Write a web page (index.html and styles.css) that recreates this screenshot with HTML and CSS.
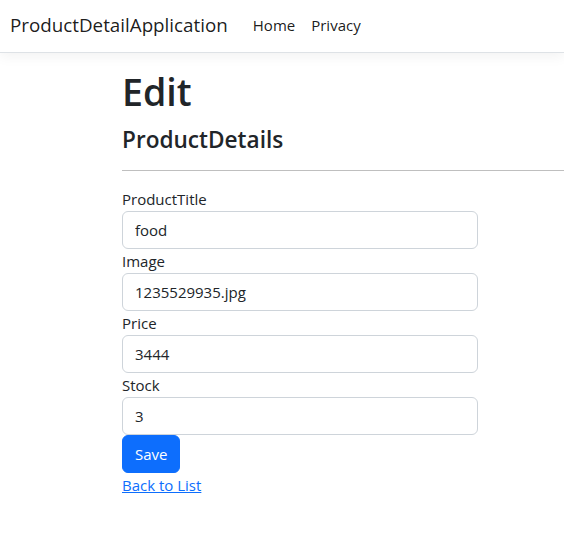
FILE: index.html
```html
<!DOCTYPE html>
<html lang="en">
<head>
<meta charset="utf-8">
<title>Edit - ProductDetailApplication</title>
<link rel="stylesheet" href="styles.css">
</head>
<body>
<header class="navbar">
  <a class="brand" href="#">ProductDetailApplication</a>
  <nav class="nav">
    <a class="nav-link" href="#">Home</a>
    <a class="nav-link" href="#">Privacy</a>
  </nav>
</header>
<main class="main">
  <h1 class="title">Edit</h1>
  <h4 class="subtitle">ProductDetails</h4>
  <hr class="divider">
  <form class="form">
    <div class="group">
      <label class="label">ProductTitle</label>
      <input class="control" type="text" value="food">
    </div>
    <div class="group">
      <label class="label">Image</label>
      <input class="control" type="text" value="1235529935.jpg">
    </div>
    <div class="group">
      <label class="label">Price</label>
      <input class="control" type="text" value="3444">
    </div>
    <div class="group">
      <label class="label">Stock</label>
      <input class="control" type="text" value="3">
    </div>
    <div class="actions">
      <button type="button" class="btn">Save</button>
    </div>
  </form>
  <div class="back"><a class="link" href="#">Back to List</a></div>
</main>
</body>
</html>
```

FILE: styles.css
```css
html, body {
  margin: 0;
  padding: 0;
  background: #fff;
}
body {
  font-family: "Open Sans", "Noto Sans", sans-serif;
  font-size: 15px;
  line-height: 24px;
  color: #212529;
}
.navbar {
  display: flex;
  align-items: center;
  height: 50px;
  padding-bottom: 2px;
  border-bottom: 1px solid #dee2e6;
  box-shadow: 0 4px 12px rgba(0, 0, 0, 0.05);
  padding-left: 10px;
  box-sizing: content-box;
}
.brand {
  font-size: 18.8px;
  line-height: 30px;
  color: rgba(0, 0, 0, 0.9);
  text-decoration: none;
  margin-right: 17px;
}
.nav {
  display: flex;
}
.nav-link {
  color: rgba(0, 0, 0, 0.9);
  text-decoration: none;
  padding: 8px;
  font-size: 15px;
  line-height: 24px;
}
.main {
  padding-left: 122px;
}
.title {
  margin: 0;
  padding-top: 15px;
  font-size: 37.6px;
  line-height: 48px;
  font-weight: 600;
}
.subtitle {
  margin: 0;
  padding-top: 9px;
  font-size: 22.6px;
  line-height: 29px;
  font-weight: 600;
}
.divider {
  margin: 16px 0;
  border: 0;
  border-top: 1px solid rgba(0, 0, 0, 0.25);
  height: 0;
}
.form {
  width: 356px;
}
.group {
  display: flex;
  flex-direction: column;
}
.label {
  line-height: 24px;
}
.control {
  box-sizing: border-box;
  height: 38px;
  padding: 6px 12px;
  font: inherit;
  line-height: 24px;
  color: #212529;
  border: 1px solid #ced4da;
  border-radius: 6px;
  background: #fff;
}
.actions {
  display: flex;
}
.btn {
  font: inherit;
  line-height: 24px;
  padding: 6px 12px;
  height: 38px;
  color: #fff;
  background: #0d6efd;
  border: 1px solid #0d6efd;
  border-radius: 6px;
}
.link {
  color: #0d6efd;
  text-decoration: underline;
}
```
